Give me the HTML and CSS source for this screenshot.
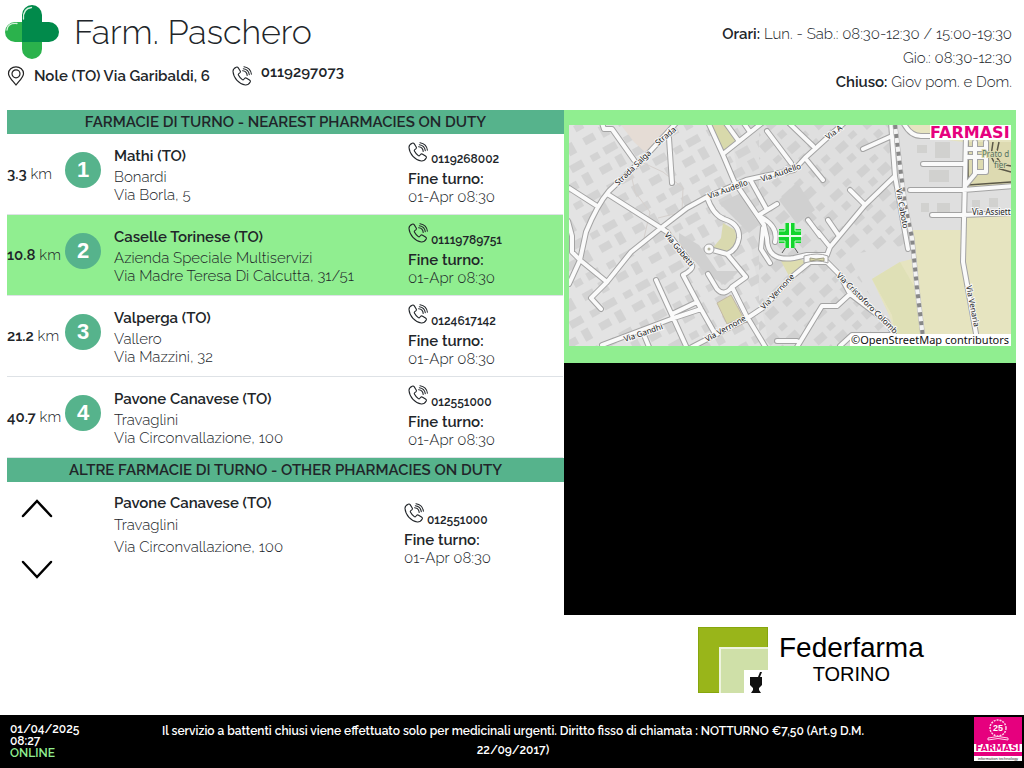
FILE: index.html
```html
<!DOCTYPE html>
<html lang="it">
<head>
<meta charset="utf-8">
<meta name="viewport" content="width=device-width, initial-scale=1">
<title>Farm. Paschero</title>
<link rel="stylesheet" href="styles.css">
</head>
<body>
<svg class="defs" aria-hidden="true">
  <symbol id="phone" viewBox="0 0 20 20">
    <path d="M4.2 1.2C2.3 2 .9 3.6 1 5.500c.5 6.500 6 12.600 12.300 13.500 2 .1 3.900-1.100 4.900-3 .4-.9.100-1.500-.7-2l-2.900-1.800c-.8-.5-1.500-.4-2.100.3l-.8 1c-.4.5-.9.500-1.400.1-1.700-1.300-3-2.800-3.900-4.600-.3-.6-.1-1 .4-1.400l1-.7c.7-.6.8-1.200.4-2L6.300 1.900c-.5-.8-1.200-1.100-2.100-.7zM10.600 4.800c2.600.2 4.400 2 4.600 4.600M11.300 2.700c3.300.4 5.600 2.700 6 6M12 .7c4 .6 6.900 3.500 7.400 7.500" fill="none" stroke="currentColor" stroke-width="1.100" stroke-linecap="round"/>
  </symbol>
</svg>

<header class="header">
  <div class="identity">
    <div class="brand">
      <svg class="cross" viewBox="0 0 54 54" aria-hidden="true">
        <path d="M17 37V17h-7a10 10 0 0 0 0 20h7v7a10 10 0 0 0 20 0v-7z" fill="#2bb24c"/>
        <path d="M17 37V10a10 10 0 0 1 20 0v7h7a10 10 0 0 1 0 20z" fill="#018a4b"/>
        <path d="M18.500 14c-.5-7 2.500-11 8-11.500M2 25c.5-4.500 4-7 10-6.500" fill="none" stroke="#d5efdc" stroke-width="1.300" stroke-linecap="round"/>
      </svg>
      <h1 class="name">Farm. Paschero</h1>
    </div>
    <div class="contacts">
      <svg class="pin" viewBox="0 0 18 20" aria-hidden="true"><path d="M9 19C6 15 1.500 11.500 1.500 7.500a7.500 6.700 0 0 1 15 0C16.500 11.500 12 15 9 19z" fill="none" stroke="#222" stroke-width="1.200"/><circle cx="9" cy="7.800" r="4" fill="none" stroke="#222" stroke-width="1.200"/></svg>
      <span class="address">Nole (TO) Via Garibaldi, 6</span>
      <svg class="phone" aria-hidden="true"><use href="#phone"/></svg>
      <span class="number">0119297073</span>
    </div>
  </div>
  <div class="hours">
    <p><b>Orari:</b> Lun. - Sab.: 08:30-12:30 / 15:00-19:30</p>
    <p>Gio.: 08:30-12:30</p>
    <p><b>Chiuso:</b> Giov pom. e Dom.</p>
  </div>
</header>

<main class="main">
  <section class="duty">
    <h2 class="bar">FARMACIE DI TURNO - NEAREST PHARMACIES ON DUTY</h2>
    <ol class="list">
      <li class="row">
        <span class="distance"><b>3.3</b> km</span><span class="badge">1</span>
        <div class="place"><h3>Mathi (TO)</h3><p>Bonardi</p><p>Via Borla, 5</p></div>
        <div class="shift"><div class="call"><svg class="phone" aria-hidden="true"><use href="#phone"/></svg><span>0119268002</span></div><b>Fine turno:</b><span>01-Apr 08:30</span></div>
      </li>
      <li class="row selected">
        <span class="distance"><b>10.8</b> km</span><span class="badge">2</span>
        <div class="place"><h3>Caselle Torinese (TO)</h3><p>Azienda Speciale Multiservizi</p><p>Via Madre Teresa Di Calcutta, 31/51</p></div>
        <div class="shift"><div class="call"><svg class="phone" aria-hidden="true"><use href="#phone"/></svg><span>01119789751</span></div><b>Fine turno:</b><span>01-Apr 08:30</span></div>
      </li>
      <li class="row">
        <span class="distance"><b>21.2</b> km</span><span class="badge">3</span>
        <div class="place"><h3>Valperga (TO)</h3><p>Vallero</p><p>Via Mazzini, 32</p></div>
        <div class="shift"><div class="call"><svg class="phone" aria-hidden="true"><use href="#phone"/></svg><span>0124617142</span></div><b>Fine turno:</b><span>01-Apr 08:30</span></div>
      </li>
      <li class="row">
        <span class="distance"><b>40.7</b> km</span><span class="badge">4</span>
        <div class="place"><h3>Pavone Canavese (TO)</h3><p>Travaglini</p><p>Via Circonvallazione, 100</p></div>
        <div class="shift"><div class="call"><svg class="phone" aria-hidden="true"><use href="#phone"/></svg><span>012551000</span></div><b>Fine turno:</b><span>01-Apr 08:30</span></div>
      </li>
    </ol>
    <h2 class="bar">ALTRE FARMACIE DI TURNO - OTHER PHARMACIES ON DUTY</h2>
    <div class="others">
      <div class="arrows">
        <button class="arrow" type="button" aria-label="Precedente"><svg viewBox="0 0 32 20"><path d="M2 18 16 3l14 15" fill="none" stroke="#000" stroke-width="2.500" stroke-linecap="round"/></svg></button>
        <button class="arrow" type="button" aria-label="Successiva"><svg viewBox="0 0 32 20"><path d="M2 2l14 15L30 2" fill="none" stroke="#000" stroke-width="2.500" stroke-linecap="round"/></svg></button>
      </div>
      <div class="place loose"><h3>Pavone Canavese (TO)</h3><p>Travaglini</p><p>Via Circonvallazione, 100</p></div>
      <div class="shift low"><div class="call"><svg class="phone" aria-hidden="true"><use href="#phone"/></svg><span>012551000</span></div><b>Fine turno:</b><span>01-Apr 08:30</span></div>
    </div>
  </section>

  <section class="side">
    <div class="map-frame">
      <svg class="map" viewBox="0 0 442 221" role="img" aria-label="Mappa">
        <defs>
          <pattern id="blocksA" width="38" height="34" patternUnits="userSpaceOnUse" patternTransform="rotate(-29)">
            <path d="M3 3h9v7h-9zM18 2h14v8h-14zM5 18h12v8h-12zM24 16h8v12h-8z" fill="#d3d3d3"/>
          </pattern>
          <pattern id="blocksB" width="36" height="32" patternUnits="userSpaceOnUse" patternTransform="rotate(-42)">
            <path d="M2 3h12v8h-12zM20 2h8v6h-8zM4 18h8v7h-8zM19 15h12v9h-12z" fill="#d1d1d1"/>
          </pattern>
          <path id="roads" d="M108-3 75 33 40 66Q28 80 17 107L11 135 0 159M0 63l28 18M40 70l52 33 6 4 25 33q2 4-9 10l18 34 13 23M32 184l-10-11 16-16 24-30 30-24 26-20 20-11 39-17 18-4 30-6 11-12 22-20 18-16M-1 96l4 15v16l8 8 27 22M33-2l2 6h8l22 31M100 13l3 45M139-3l15 33 11 26 30 44 3 13q0 24 27 20l13-3h20M154 29 193-2M156-3l13 18M174-3l7 10M198 6l24 32M182 56l15 27M190 90l18-11M190 91q20 10 16 26M138 72q6 18 17 22 16 5 15 19-2 12-12 16l-18-5M158 129l19 23-14 10 14 28 20 33M163 162q-8 10-15 2l-9-15M194 103l-2 21 9 14M33 220l69-26 30-10M103 189l25-12M87 155l30 66M75 210l5 12M123 222l54-28 18-12 30-32 16-13h17l13 13 10 19 37 28 10 18M281 169l-13 12h-15l-25 41M208 216h20M271 221l12-11h41M258 130l3-8 35-42 30-29-3-40-1-14M249 107l12 15M281 65l15 15M239 95l12 16M259 95l11 16M236 33l18 22M220-2l24 23M294 24l29-13M326 51l13 73M334-3q7 14 18 14h44M397 10l-3 127 16 88M354 39h40M341 65h53l50-4M363 90h31l48-2M396 61l10-12V17M397 24h20M397 32h20M417 17v30h-10"/>
        </defs>
        <rect width="442" height="221" fill="#dfdfdf"/>
        <path d="M0 0h160l40 221H0z" fill="#e3e3e3"/>
        <path d="M0 0h190v221H0z" fill="url(#blocksA)"/>
        <path d="M190 0h136l12 120-60 10 40 70-20 21H190z" fill="url(#blocksB)"/>
        <path d="M110 108l20 12 18 26 22 0-14 14-20-12-26-30zM150 78l22-10 18 32-10 8zM210 75l18-18 18 28-18 14z" fill="#d0d0d0"/>
        <path d="M52 0h50L78 29 65 17z" fill="#e5dcd5"/>
        <path d="M142 0h17l9 14-13 12z" fill="#d8d9ab"/>
        <path d="M154 98l12 7 2 12-9 9-17-1 10-12z" fill="#d9d9af"/>
        <path d="M148 178l14-8 12 22-16 7z" fill="#d8d7a9" stroke="#c4b9a4"/>
        <path d="M212 136l20-2 4 3-16 14z" fill="#deddb0"/>
        <path d="M334 0h108v17h-48l-46-6zM343 105h49l4-14h46v130H322l4-14-6-17-17-36 28-17 12-3z" fill="#e6e4c0"/>
        <path d="M303 154l28-17 14 24 8 60h-31l4-12-3-19z" fill="#dfe0b6"/>
        <path d="M398 17h44v42l-44 4z" fill="#dddab1"/>
        <path d="M348 20h10v8h-10zM366 17h15v16h-15zM352 78h8v9h-8zM368 78h13v9h-13zM403 75h8v8h-8zM420 73h9v9h-9zM360 45h20v12h-20z" fill="#d1d1cf"/>
        <path d="M399 16v44l43-3M424 17l-2 14 6 12 14 4M430 17l-3 14 5 8 10 2" fill="none" stroke="#5b5848" stroke-width="1.500"/>
        <path d="M75 113l6-26-15-20-4-18 10-8M68 35l26 12 20 16-1 24-24 6" fill="none" stroke="#d5d0cd"/>
        <use href="#roads" class="road-edge"/>
        <use href="#roads" class="road-fill"/>
        <circle cx="140" cy="124" r="5" fill="#fafafa" stroke="#a3a3a3"/><circle cx="140" cy="124" r="1.500" fill="#b5b5a0"/>
        <path d="M235 131q14-4 24 0v7q-10-4-24 0z" fill="#fafafa" stroke="#a3a3a3"/>
        <path d="M241 133q5 2 14 0v3q-7-2-14 0z" fill="#d8d7a9" stroke="#a09e84"/>
        <path d="M326 0l3 25 7 55 7 33 5 50 7 58" fill="none" stroke="#b7b7b7" stroke-width="5"/>
        <path d="M326 0l3 25 7 55 7 33 5 50 7 58" fill="none" stroke="#f3f3f3" stroke-width="4"/>
        <path d="M326 0l3 25 7 55 7 33 5 50 7 58" fill="none" stroke="#888" stroke-width="4" stroke-dasharray="4 5"/>
        <g class="streets">
          <text transform="translate(49 61) rotate(-44)">Strada Salga</text>
          <text transform="translate(89 21) rotate(-40)">Strada</text>
          <text transform="translate(140 74) rotate(-20)">Via Audello</text>
          <text transform="translate(193 57) rotate(-19)">Via Audello</text>
          <text transform="translate(259 15) rotate(-36)">Via A</text>
          <text transform="translate(95 110) rotate(51)">Via Gobetti</text>
          <text transform="translate(56 217) rotate(-19)">Via Gandhi</text>
          <text transform="translate(138 217) rotate(-29)">Via Vernone</text>
          <text transform="translate(195 185) rotate(-47)">Via Vernone</text>
          <text transform="translate(267 151) rotate(45)">Via Cristoforo Colomb</text>
          <text transform="translate(327 64) rotate(80)">Via Caboto</text>
          <text transform="translate(397 161) rotate(79)">Via Venaria</text>
          <text x="403" y="90">Via Assiett</text>
          <text class="park" x="413" y="32">Prato d</text>
          <text class="park" x="425" y="43">fier</text>
        </g>
        <path d="M213 128l8-12 8 12" fill="none" stroke="#555"/>
        <path d="M210 104h22v14h-22zM216 98h10v25h-10z" fill="#14d52d"/>
        <path d="M221 98v25M209 111h24" stroke="#e6ffe8" stroke-width="2"/>
        <path d="M216 98v8h-7M226 98v8h7M216 123v-7h-7M226 123v-7h7" fill="none" stroke="#b9f7c0"/>
        <path d="M361 0h81v15h-81zM281 209h161v12H281z" fill="#fff"/>
        <text class="map-brand" x="361" y="13">FARMASI</text>
        <text class="credit" x="282" y="219">©OpenStreetMap contributors</text>
      </svg>
    </div>
    <div class="screen"></div>
    <div class="association">
      <svg class="association-mark" viewBox="0 0 70 66" aria-hidden="true">
        <path d="M0 0h70v66H0z" fill="#86a60d"/><path d="M1 1h68v64H1z" fill="#99b51a"/>
        <path d="M21 20h49v46H21z" fill="#eef4df"/><path d="M23 22h47v44H23z" fill="#cfe0a8"/>
        <path d="M46 43h24v23H46z" fill="#fff"/><path d="M52 50h12v8l-3 3v2l2 3H53l2-3v-2l-3-3zM60 50l2-5h2l-2 5z" fill="#111"/>
      </svg>
      <div class="association-name"><span class="big">Federfarma</span><span class="small">TORINO</span></div>
    </div>
  </section>
</main>

<footer class="footer">
  <div class="status"><span>01/04/2025</span><span>08:27</span><span class="online">ONLINE</span></div>
  <p class="notice">Il servizio a battenti chiusi viene effettuato solo per medicinali urgenti. Diritto fisso di chiamata : NOTTURNO €7,50 (Art.9 D.M. 22/09/2017)</p>
  <svg class="vendor" viewBox="0 0 48 44" role="img" aria-label="Farmasi information technology">
    <rect width="48" height="44" fill="#e6007e"/>
    <circle cx="24" cy="11" r="8" fill="none" stroke="#ffd3ea" stroke-width="1.500" stroke-dasharray="2 1"/>
    <text class="years" x="24" y="14">25</text>
    <path d="M14 21q10-3 20 0v2q-10-3-20 0z" fill="none" stroke="#ffd3ea"/>
    <path d="M0 27h48v8H0zM0 39h48v5H0z" fill="#fff"/>
    <text class="vendor-name" x="24" y="34">FARMASI</text>
    <text class="vendor-tag" x="24" y="43">information technology</text>
  </svg>
</footer>
</body>
</html>
```

FILE: styles.css
```css
* { box-sizing: border-box; }
body {
  margin: 0;
  min-height: 100vh;
  display: flex;
  flex-direction: column;
  background: #fff;
  color: #212529;
  font: 300 15px/18px Raleway, Lato, "Open Sans", sans-serif;
}
h1, h2, h3, p, ol { margin: 0; padding: 0; font-weight: 300; }
b, h3 { font-weight: 600; }
.defs { position: absolute; width: 0; height: 0; }

.header { display: flex; justify-content: space-between; min-height: 110px; padding: 5px 12px 0 5px; }
.brand { display: flex; align-items: center; gap: 15px; }
.cross { width: 54px; height: 54px; }
.name { font-size: 34px; line-height: 54px; font-weight: 300; }
.contacts { display: flex; align-items: center; gap: 9px; padding: 4px 2px; font-weight: 600; }
.pin { width: 18px; height: 20px; }
.phone { width: 20px; height: 20px; flex: none; }
.address { margin-right: 13px; }
.contacts .number { padding-bottom: 8px; }
.hours { padding-top: 17px; text-align: right; line-height: 24px; }

.main { flex: 1; display: grid; grid-template-columns: 557fr 452fr; padding: 0 8px 0 7px; }
.bar { background: #56b38c; text-align: center; font-size: 15px; line-height: 24px; font-weight: 600; }
.list { list-style: none; }
.row { display: grid; grid-template-columns: 58px 36px 1fr 155px; height: 81px; border-bottom: 1px solid #dee2e6; margin-right: 1px; }
.selected { background: #90ee90; }
.distance { align-self: center; white-space: nowrap; }
.badge { align-self: center; width: 36px; height: 36px; margin-bottom: 8px; border-radius: 50%; background: #56b38c; color: #fff; font: 700 22px/36px "Liberation Sans", sans-serif; text-align: center; }
.place { padding: 13px 0 0 13px; }
.place h3 { font-size: 15px; margin-bottom: 3px; }
.shift { display: flex; flex-direction: column; padding-top: 8px; }
.call { display: flex; align-items: flex-end; gap: 3px; height: 28px; padding-bottom: 4px; font-size: 12px; line-height: 14px; font-weight: 600; }
.call .phone { align-self: flex-start; }
.others { display: grid; grid-template-columns: 94px 1fr 160px; }
.arrows { display: flex; flex-direction: column; gap: 42px; padding: 16px 0 0 14px; }
.arrow { width: 32px; height: 20px; padding: 0; border: 0; background: none; }
.arrow svg { display: block; }
.loose { padding-top: 10px; line-height: 22px; }
.loose h3 { margin: 0; }
.low { padding-top: 21px; }

.side { display: flex; flex-direction: column; }
.map-frame { background: #90ee90; padding: 15px 5px 17px; }
.map { display: block; width: 100%; }
.road-edge, .road-fill { fill: none; stroke-linecap: round; stroke-linejoin: round; }
.road-edge { stroke: #a3a3a3; stroke-width: 6px; }
.road-fill { stroke: #fafafa; stroke-width: 4px; }
.streets text { font: 8px "Noto Sans", sans-serif; fill: #222; stroke: #f7f7f7; stroke-width: 2px; paint-order: stroke; }
.streets .park { fill: #55725f; stroke: #dddab1; }
.map-brand { font: 700 16px "DejaVu Sans", sans-serif; fill: #e6007e; }
.credit { font: 11px "Noto Sans", sans-serif; fill: #111; }
.screen { height: 252px; background: #000; }
.association { display: flex; align-items: center; gap: 11px; padding: 12px 0 0 134px; }
.association-mark { width: 70px; height: 66px; }
.association-name { display: flex; flex-direction: column; align-items: center; color: #000; font-family: "Liberation Sans", sans-serif; font-weight: 400; }
.big { font-size: 28px; line-height: 28px; }
.small { font-size: 20px; line-height: 24px; }

.footer { display: grid; grid-template-columns: 138px minmax(0, 730px) 1fr; min-height: 53px; padding: 2px 2px 0 10px; background: #000; color: #fff; font-size: 12px; font-weight: 600; }
.status { display: flex; flex-direction: column; padding-top: 6px; line-height: 12px; }
.online { color: #90ee90; }
.notice { padding-top: 5px; text-align: center; line-height: 19px; font-weight: 600; }
.vendor { width: 48px; height: 44px; justify-self: end; }
.years { font: 700 9px "Liberation Sans", sans-serif; fill: #fff; text-anchor: middle; }
.vendor-name { font: 700 9px "DejaVu Sans", sans-serif; fill: #e6007e; text-anchor: middle; }
.vendor-tag { font: 4px "Liberation Sans", sans-serif; fill: #333; text-anchor: middle; }
```
